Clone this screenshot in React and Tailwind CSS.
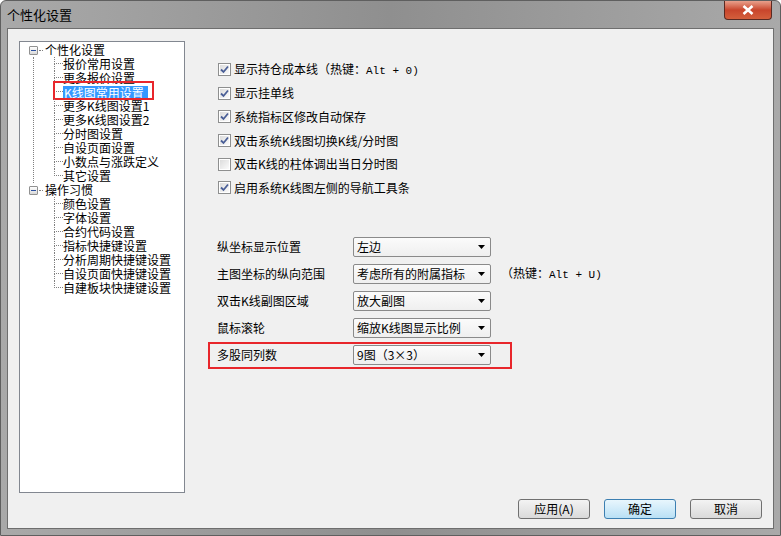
import React from 'react';

const CJK = { fontFamily: '"Noto Sans CJK SC", "Liberation Sans", sans-serif' };

const tree = [
  {
    label: '个性化设置',
    children: ['报价常用设置', '更多报价设置', 'K线图常用设置', '更多K线图设置1', '更多K线图设置2', '分时图设置', '自设页面设置', '小数点与涨跌定义', '其它设置'],
  },
  {
    label: '操作习惯',
    children: ['颜色设置', '字体设置', '合约代码设置', '指标快捷键设置', '分析周期快捷键设置', '自设页面快捷键设置', '自建板块快捷键设置'],
  },
];

const checks = [
  { label: '显示持仓成本线（热键：', hot: 'Alt + 0)', on: true },
  { label: '显示挂单线', on: true },
  { label: '系统指标区修改自动保存', on: true },
  { label: '双击系统K线图切换K线/分时图', on: true },
  { label: '双击K线的柱体调出当日分时图', on: false },
  { label: '启用系统K线图左侧的导航工具条', on: true },
];

const selects = [
  { label: '纵坐标显示位置', value: '左边' },
  { label: '主图坐标的纵向范围', value: '考虑所有的附属指标', hot: 'Alt + U)' },
  { label: '双击K线副图区域', value: '放大副图' },
  { label: '鼠标滚轮', value: '缩放K线图显示比例' },
];

function Toggle() {
  return (
    <div className="w-[9px] h-[9px] border border-[#919191] rounded-[1px] bg-gradient-to-b from-white to-[#d8d8d8] flex items-center justify-center">
      <div className="w-[5px] h-[1px] bg-[#2a4f9e]" />
    </div>
  );
}

function TreeGroup({ group, hasNext }) {
  return (
    <div>
      <div className="flex items-center h-[14px]">
        <Toggle />
        <div className="w-[4px] border-t border-dotted border-[#808080] ml-[1px]" />
        <span className="ml-[2px] leading-[14px]">{group.label}</span>
      </div>
      <div className="flex">
        <div className="w-[25px] flex">
          {hasNext && <div className="ml-[4px] border-l border-dotted border-[#808080]" />}
        </div>
        <div>
          {group.children.map((c, i) => {
            const last = i === group.children.length - 1;
            const sel = c === 'K线图常用设置';
            return (
              <div key={c} className="flex h-[14px] relative">
                <div className="w-[9px] flex flex-col">
                  <div className="h-[7px] border-l border-b border-dotted border-[#808080]" />
                  {!last && <div className="flex-1 border-l border-dotted border-[#808080]" />}
                </div>
                {sel ? (
                  <span className="leading-[13px] h-[13px] mt-[1px] bg-[#3399ff] text-white pl-[1px] pr-[4px]">{c}</span>
                ) : (
                  <span className="leading-[14px]">{c}</span>
                )}
                {sel && (
                  <div className="absolute left-[-1px] top-[-4px] w-[101px] h-[19px] border-2 border-[#e8262b]" />
                )}
              </div>
            );
          })}
        </div>
      </div>
    </div>
  );
}

function Checkbox({ on }) {
  return (
    <div className="w-[13px] h-[13px] border border-[#8e8f8f] bg-white p-[1px]">
      <div className="w-full h-full bg-gradient-to-br from-[#dcdcdc] to-[#fbfbfb] flex items-center justify-center">
        {on && (
          <svg width="9" height="9" viewBox="0 0 9 9">
            <path d="M1 4.5 L3.5 7 L8 1.5" fill="none" stroke="#4a5f97" strokeWidth="1.8" />
          </svg>
        )}
      </div>
    </div>
  );
}

function Select({ value }) {
  return (
    <div className="w-[138px] h-[20px] border border-[#8a8a8a] rounded-[2px] bg-gradient-to-b from-[#fbfbfb] to-[#efefef] flex items-center pl-[3px] pr-[5px]">
      <span className="flex-1 leading-[18px]">{value}</span>
      <svg width="7" height="4" viewBox="0 0 7 4">
        <path d="M0 0 H7 L3.5 4 Z" fill="#000" />
      </svg>
    </div>
  );
}

function Hot({ text }) {
  return (
    <span>
      （热键：<span style={{ fontFamily: '"Liberation Mono", monospace' }} className="text-[11px]">{text}</span>
    </span>
  );
}

function Btn({ children, primary }) {
  return (
    <button
      type="button"
      className={`w-[72px] h-[20px] rounded-[3px] border text-[12px] leading-[18px] ${
        primary
          ? 'border-[#3c7fb1] bg-gradient-to-b from-[#e8f6fd] to-[#b9e0f5]'
          : 'border-[#707070] bg-gradient-to-b from-[#f3f3f3] to-[#dadada]'
      }`}
    >
      {children}
    </button>
  );
}

export default function App() {
  return (
    <div
      style={CJK}
      className="w-[781px] h-[536px] flex flex-col text-[12px] text-black bg-gradient-to-r from-[#a9a9a9] via-[#8f8f8f] to-[#a9a9a9] border border-[#5f5f5f] rounded-t-[6px] overflow-hidden"
    >
      {/* 标题栏 */}
      <div className="h-[27px] flex items-start pl-[6px] pr-[8px]">
        <span className="mt-[6px] leading-[16px] text-[13px]">个性化设置</span>
        <div className="ml-auto w-[48px] h-[19px] rounded-b-[4px] border border-[#5a2a22] border-t-0 bg-gradient-to-b from-[#e8a08c] via-[#c8452c] to-[#d45f3c] flex items-center justify-center">
          <svg width="12" height="10" viewBox="0 0 12 10">
            <path d="M1.5 1 L10.5 9 M10.5 1 L1.5 9" stroke="#fff" strokeWidth="2.6" />
          </svg>
        </div>
      </div>

      {/* 主体 */}
      <div className="mx-[6px] mb-[6px] flex-1 border border-[#6e6e6e] bg-[#f0f0f0] flex flex-col pt-[12px] pl-[11px] pr-[11px]">
        <div className="flex">
          <div className="w-[166px] h-[452px] border border-[#828790] bg-white pt-[1px] pl-[9px]">
            {tree.map((g, i) => (
              <TreeGroup key={g.label} group={g} hasNext={i < tree.length - 1} />
            ))}
          </div>

          <div className="flex-1 pl-[33px] pt-[17px]">
            {checks.map((c) => (
              <div key={c.label} className="h-[23.6px] flex items-center gap-[3px]">
                <Checkbox on={c.on} />
                <span className="leading-[14px]">
                  {c.label}
                  {c.hot && <span style={{ fontFamily: '"Liberation Mono", monospace' }} className="text-[11px]">{c.hot}</span>}
                </span>
              </div>
            ))}

            <div className="mt-[34px]">
              {selects.map((s) => (
                <div key={s.label} className="h-[27px] flex items-center">
                  <span className="w-[136px] -ml-[1px]">{s.label}</span>
                  <Select value={s.value} />
                  {s.hot && (
                    <span className="ml-[10px]">
                      <Hot text={s.hot} />
                    </span>
                  )}
                </div>
              ))}
              <div className="-ml-[10px] w-[304px] h-[27px] border-2 border-[#e8262b] flex items-center pl-[7px]">
                <span className="w-[136px]">多股同列数</span>
                <Select value="9图（3×3）" />
              </div>
            </div>
          </div>
        </div>

        <div className="mt-[6px] flex justify-end gap-[14px]">
          <Btn>应用(A)</Btn>
          <Btn primary>确定</Btn>
          <Btn>取消</Btn>
        </div>
      </div>
    </div>
  );
}
